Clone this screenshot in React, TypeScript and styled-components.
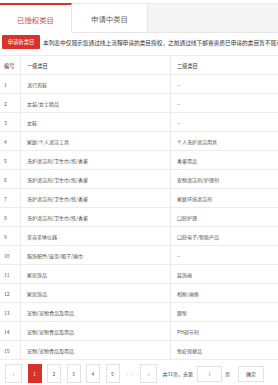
import styled, { createGlobalStyle } from "styled-components";

const GlobalStyle = createGlobalStyle`
    html, body { margin: 0; padding: 0; background: #fff; }
    body { font-family: "Noto Sans CJK SC", "Noto Sans", sans-serif; color: #333; }
    * { box-sizing: border-box; }
`;

const rows: [string, string, string][] = [
    ["1", "流行男鞋", "--"],
    ["2", "女装/女士精品", "--"],
    ["3", "女鞋", "--"],
    ["4", "家庭/个人清洁工具", "个人洗护清洁用具"],
    ["5", "洗护清洁剂/卫生巾/纸/香薰", "香薰用品"],
    ["6", "洗护清洁剂/卫生巾/纸/香薰", "衣物清洁剂/护理剂"],
    ["7", "洗护清洁剂/卫生巾/纸/香薰", "家庭环境清洁剂"],
    ["8", "洗护清洁剂/卫生巾/纸/香薰", "口腔护理"],
    ["9", "美容美体仪器", "口腔电子/智能产品"],
    ["10", "服饰配件/皮带/帽子/围巾", "--"],
    ["11", "家居饰品", "装饰画"],
    ["12", "家居饰品", "相框/画框"],
    ["13", "宠物/宠物食品及用品", "脚垫"],
    ["14", "宠物/宠物食品及用品", "PH调节剂"],
    ["15", "宠物/宠物食品及用品", "免疫保健品"],
];

const App = () => {
    return (
        <>
            <GlobalStyle />
            <Page>
                <TabBar>
                    <Tab $active>已授权类目</Tab>
                    <Tab>申请中类目</Tab>
                    <TabFiller />
                </TabBar>

                <Notice>
                    <RedButton>申请新类目</RedButton>
                    <NoticeText>本列表中仅展示您通过线上流程申请的类目授权，之前通过线下邮寄资质已申请的类目暂不展示</NoticeText>
                </Notice>

                <Table>
                    <HeadRow>
                        <Cell>编号</Cell>
                        <Cell $divider>一级类目</Cell>
                        <Cell $divider>二级类目</Cell>
                    </HeadRow>
                    {rows.map(([no, first, second]) => (
                        <Row key={no}>
                            <Cell>{no}</Cell>
                            <Cell $divider>{first}</Cell>
                            <Cell $divider>{second}</Cell>
                        </Row>
                    ))}
                </Table>

                <Pager>
                    <PageBtn $wide>‹</PageBtn>
                    <PageBtn $active>1</PageBtn>
                    <PageBtn>2</PageBtn>
                    <PageBtn>3</PageBtn>
                    <PageBtn>4</PageBtn>
                    <PageBtn>5</PageBtn>
                    <Ellipsis>···</Ellipsis>
                    <PageBtn $wide>›</PageBtn>
                    <PagerText>共31页，去第</PagerText>
                    <PageInput defaultValue="1" />
                    <PagerText>页</PagerText>
                    <ConfirmBtn>确定</ConfirmBtn>
                </Pager>
            </Page>
        </>
    );
};

export default App;

// ================= STYLES =================

const Page = styled.div`
    width: 278px; height: 385px; overflow: hidden; padding-top: 3px;
`;

const TabBar = styled.div`
    display: flex; height: 30px;
`;

const Tab = styled.div<{ $active?: boolean }>`
    width: ${({ $active }) => ($active ? "72px" : "76px")};
    display: flex; align-items: center; justify-content: center;
    font-size: 7.4px;
    color: ${({ $active }) => ($active ? "#d04a44" : "#666")};
    background: #fff;
    border-top: ${({ $active }) => ($active ? "2px solid #d9322b" : "1px solid #e6e6e6")};
    border-right: 1px solid #e6e6e6;
    border-bottom: ${({ $active }) => ($active ? "none" : "1px solid #e6e6e6")};
`;

const TabFiller = styled.div`
    flex: 1; background: #f5f5f5; border-top: 1px solid #ececec; border-bottom: 1px solid #e6e6e6;
`;

const Notice = styled.div`
    display: flex; align-items: center; gap: 3px; margin-top: 2px; padding-left: 2px;
    white-space: nowrap; overflow: hidden;
`;

const RedButton = styled.div`
    flex: none; width: 38px; height: 14px; background: #d9322b; color: #fff;
    font-size: 5.3px; display: flex; align-items: center; justify-content: center;
    border-radius: 1px;
`;

const NoticeText = styled.span`
    font-size: 5.7px; color: #333;
`;

const Table = styled.div`
    margin-top: 6px; border-top: 1px solid #ececec;
`;

const Row = styled.div`
    display: grid; grid-template-columns: 20px 150px 1fr;
    height: 19px; border-bottom: 1px solid #ececec;
    font-size: 5px; color: #555;
`;

const HeadRow = styled(Row)`
    color: #333; font-size: 5.2px;
`;

const Cell = styled.div<{ $divider?: boolean }>`
    display: flex; align-items: center; padding-left: ${({ $divider }) => ($divider ? "6px" : "4px")};
    border-left: ${({ $divider }) => ($divider ? "1px solid #ececec" : "none")};
    white-space: nowrap; overflow: hidden;
`;

const Pager = styled.div`
    display: flex; align-items: center; margin-top: 4px; padding-left: 5px; height: 19px;
`;

const PageBtn = styled.div<{ $active?: boolean; $wide?: boolean }>`
    flex: none; width: ${({ $wide }) => ($wide ? "17px" : "14px")}; height: 19px;
    margin-right: 5.5px;
    display: flex; align-items: center; justify-content: center;
    font-size: ${({ $wide }) => ($wide ? "8px" : "5px")};
    color: ${({ $active, $wide }) => ($active ? "#fff" : $wide ? "#aaa" : "#555")};
    background: ${({ $active }) => ($active ? "#d9322b" : "#fff")};
    border: 1px solid ${({ $active }) => ($active ? "#d9322b" : "#e2e2e2")};
`;

const Ellipsis = styled.span`
    width: 12px; margin-right: 3px; font-size: 5px; color: #bbb; text-align: center;
`;

const PagerText = styled.span`
    font-size: 5px; color: #444; margin: 0 2px 0 0;
`;

const PageInput = styled.input`
    width: 25px; height: 16px; margin: 0 3px 0 2px; padding: 0;
    border: 1px solid #e2e2e2; font-size: 5px; text-align: center; color: #999;
    font-family: inherit; outline: none;
`;

const ConfirmBtn = styled.div`
    width: 26px; height: 16px; margin-left: 6px; border: 1px solid #e2e2e2;
    display: flex; align-items: center; justify-content: center;
    font-size: 5px; color: #444;
`;
